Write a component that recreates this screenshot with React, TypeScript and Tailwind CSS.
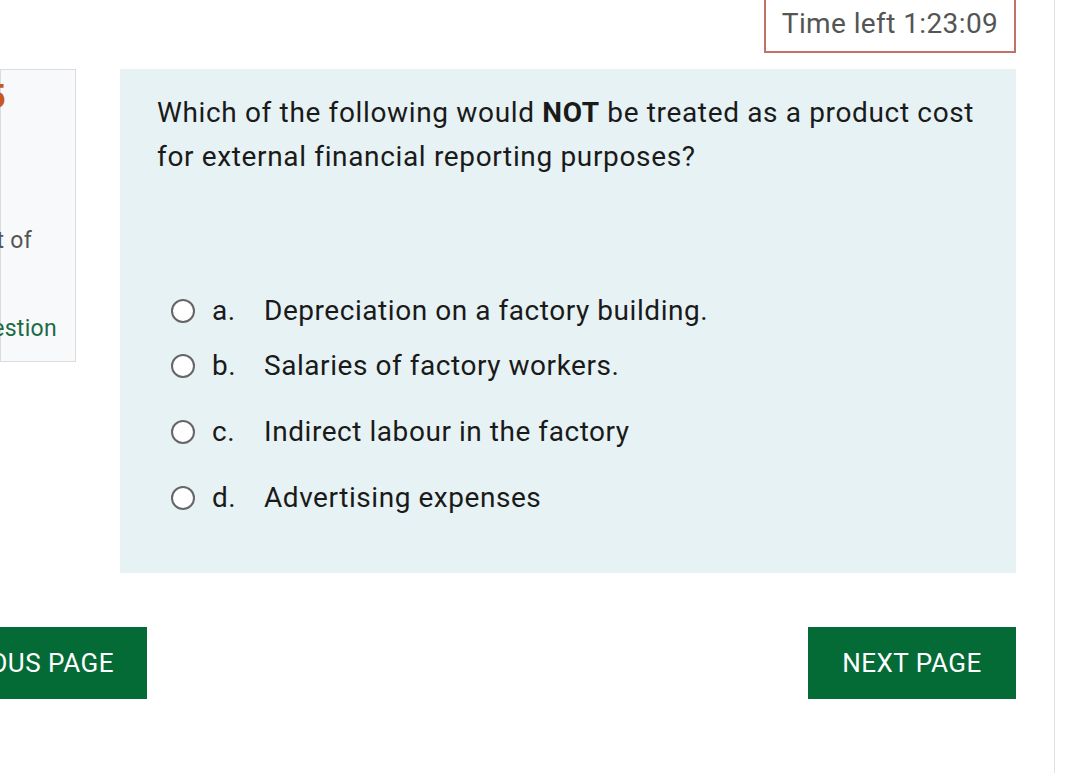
import { Flag } from 'lucide-react';

const options = [
  { letter: 'a.', text: 'Depreciation on a factory building.', gap: 'mt-0' },
  { letter: 'b.', text: 'Salaries of factory workers.', gap: 'mt-[23px]' },
  { letter: 'c.', text: 'Indirect labour in the factory', gap: 'mt-[34px]' },
  { letter: 'd.', text: 'Advertising expenses', gap: 'mt-[34px]' },
];

export default function App() {
  return (
    <div className="h-[773px] w-[1080px] overflow-hidden bg-white font-['Roboto',_'Liberation_Sans',_sans-serif]">
      <div className="h-full w-[1055px] border-r border-[#e2e2e2]">
        {/* timer */}
        <div className="flex justify-end pr-[38px]">
          <div className="mt-[-8px] flex h-[61px] w-[252px] items-center justify-center border-2 border-[#c07268] pt-[2px] text-[28px] tracking-[0.4px] text-[#555]">
            Time left 1:23:09
          </div>
        </div>

        <div className="mt-[16px] flex items-start">
          {/* question info, clipped on the left */}
          <div className="w-[76px] shrink-0 overflow-hidden">
            <div className="flex h-[293px] flex-col items-end border border-[#dcdcdc] bg-[#f8f9fa] text-[23px] tracking-[0.3px] whitespace-nowrap">
              <div className="mt-[6px] mr-[69px] text-[34px] font-bold leading-[40px] text-[#c8581b]">
                <span className="font-normal text-[#333]">Question </span>5
              </div>
              <div className="mt-[6px] mr-[90px] text-[20px] text-[#555]">Not yet answered</div>
              <div className="mt-[74px] mr-[43px] leading-[30px] text-[#555]">Marked out of</div>
              <div className="mr-[90px] leading-[30px] text-[#555]">1.00</div>
              <div className="mt-[28px] mr-[18px] flex items-center gap-[6px] leading-[30px] text-[#1d6b45]">
                <Flag className="h-[20px] w-[20px]" />
                Flag question
              </div>
            </div>
          </div>

          {/* question box */}
          <div className="ml-[44px] h-[504px] w-[896px] bg-[#e7f2f4] pt-[22px] pr-[12px] pl-[37px] text-[#1a1a1a]">
            <p className="text-[28px] leading-[44px] tracking-[0.65px]">
              Which of the following would <span className="font-bold">NOT</span> be treated as a product cost
              for external financial reporting purposes?
            </p>
            <div className="mt-[116px] flex flex-col">
              {options.map((o) => (
                <label key={o.letter} className={`flex items-center ${o.gap}`}>
                  <span className="ml-[14px] h-[24px] w-[24px] rounded-full border-2 border-[#666] bg-white" />
                  <span className="ml-[17px] w-[52px] text-[28px] leading-[32px] tracking-[0.55px]">{o.letter}</span>
                  <span className="text-[28px] leading-[32px] tracking-[0.55px]">{o.text}</span>
                </label>
              ))}
            </div>
          </div>
        </div>

        {/* navigation */}
        <div className="mt-[54px] flex items-center justify-between pr-[38px]">
          <div className="w-[147px] shrink-0 overflow-hidden">
            <div className="flex justify-end">
              <button className="flex h-[72px] items-center bg-[#046b37] pr-[33px] pl-[33px] text-[26px] tracking-[0.5px] whitespace-nowrap text-white">
                PREVIOUS PAGE
              </button>
            </div>
          </div>
          <button className="flex h-[72px] w-[208px] items-center justify-center bg-[#046b37] text-[26px] tracking-[0.5px] text-white">
            NEXT PAGE
          </button>
        </div>
      </div>
    </div>
  );
}
